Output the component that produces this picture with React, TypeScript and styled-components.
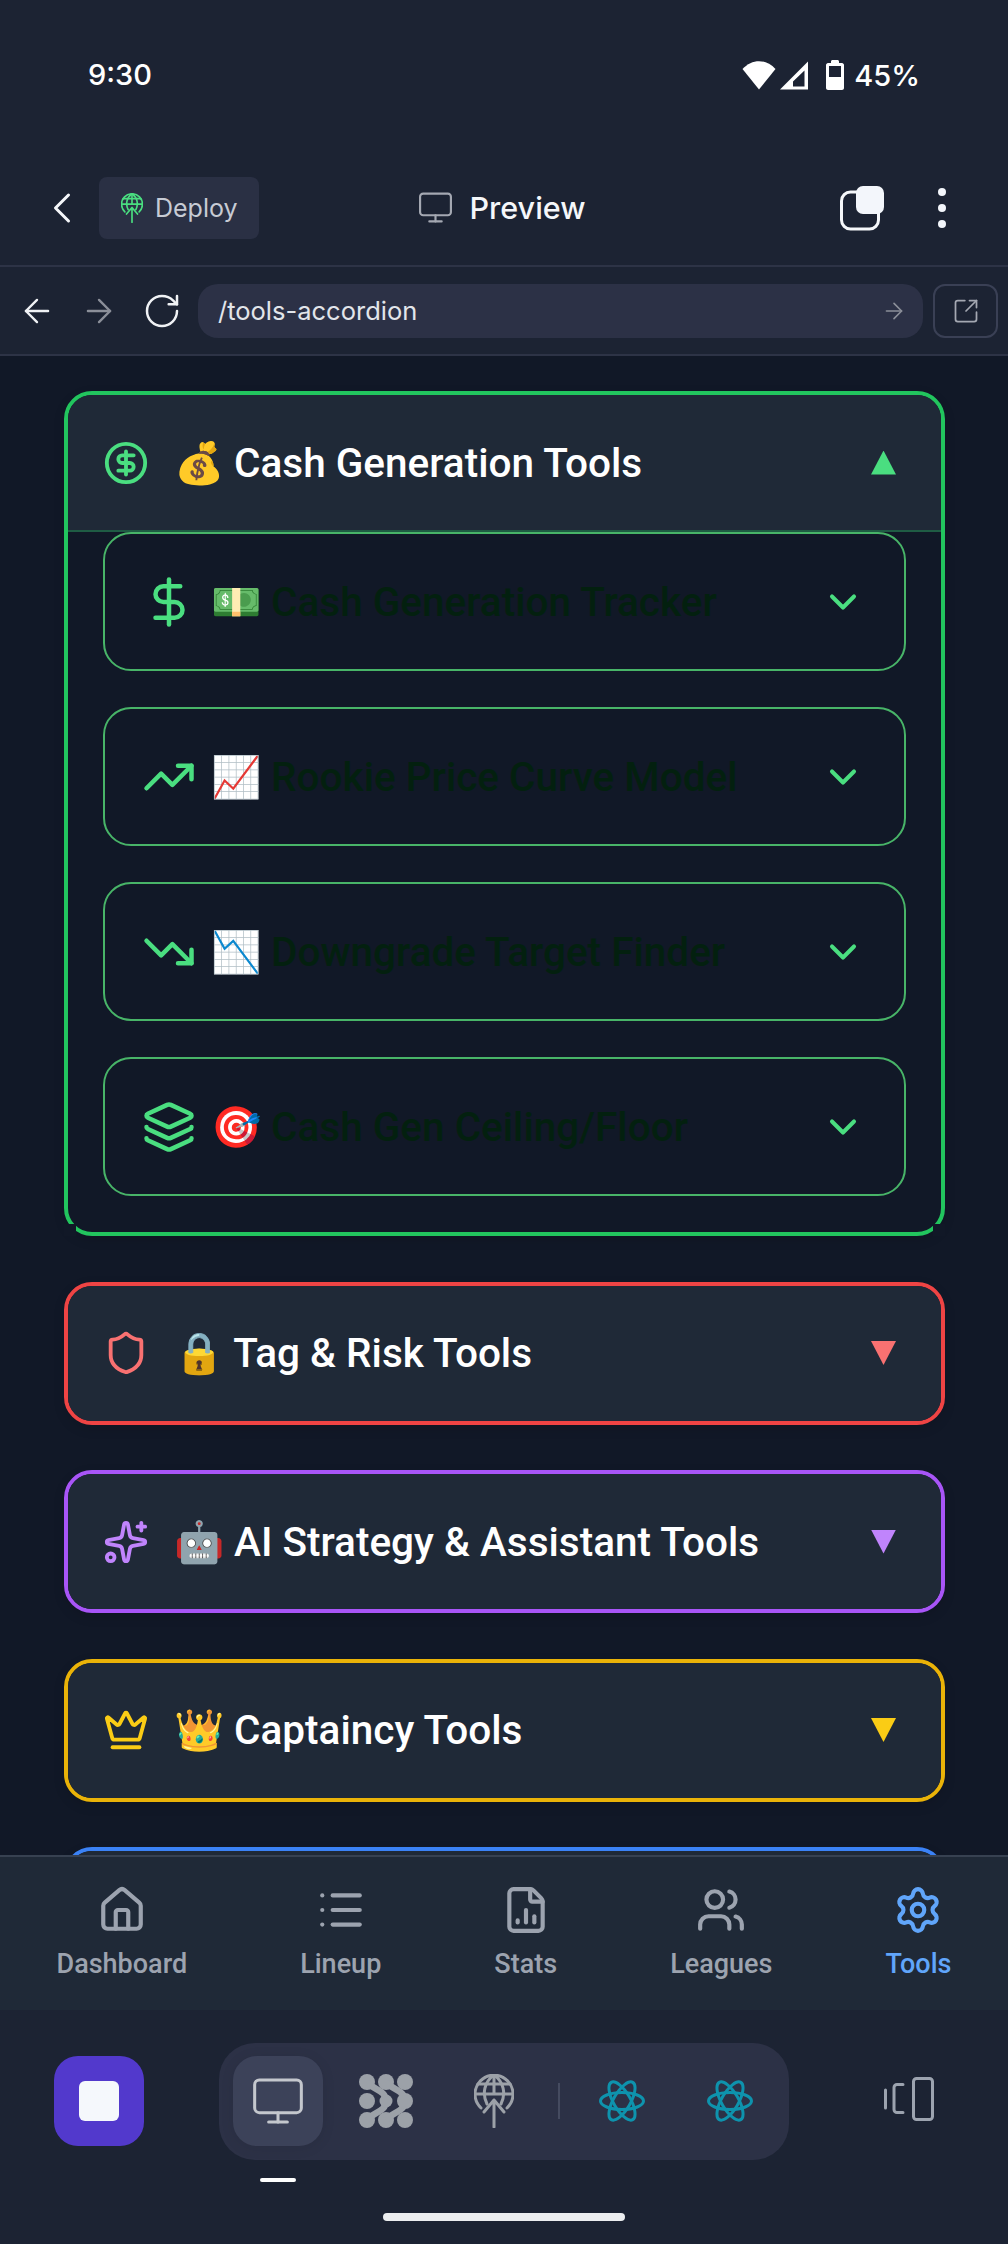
import React from "react";
import styled, { createGlobalStyle } from "styled-components";
import { ChevronLeft, Monitor, ArrowLeft, ArrowRight, RotateCw, SquareArrowOutUpRight, CircleDollarSign, DollarSign, TrendingUp, TrendingDown, Layers, Shield, Sparkles, Crown, ChevronDown, House, List, FileChartColumn, Users, Settings } from "lucide-react";

const Global = createGlobalStyle`
  html, body { margin: 0; padding: 0; background: #111827; }
  * { box-sizing: border-box; }
`;
const Screen = styled.div`
  width: 1008px; height: 2244px; display: flex; flex-direction: column; overflow: hidden;
  font-family: Roboto, "Noto Sans", sans-serif; color: #fff; background: #111827;
`;
const StatusBar = styled.div`
  height: 150px; flex: none; background: #1c2333; display: flex; justify-content: space-between; align-items: flex-start;
  padding: 58px 88px 0; font: 500 29px/34px Inter, sans-serif;
`;
const StatusRight = styled.div`display: flex; align-items: center; margin-top: 1px;`;
const StatusIcon = styled.svg<{ $mr: number }>`margin: -2px ${p => p.$mr}px 0 0; flex: none;`;
const Header = styled.div`
  height: 117px; flex: none; background: #1c2333; border-bottom: 2px solid #2d3346; display: grid; grid-template-columns: 1fr auto 1fr;
  align-items: center; padding: 0 62px 0 36px; font-family: Inter, sans-serif;
`;
const HeaderLeft = styled.div`display: flex; align-items: center; gap: 11px;`;
const HeaderRight = styled.div`display: flex; align-items: center; justify-content: flex-end; gap: 53px;`;
const DeployChip = styled.div`
  width: 160px; height: 62px; background: #2a3044; border-radius: 8px; display: flex; align-items: center; gap: 12px; padding-left: 22px;
  font-size: 25px; color: #c7cbd4;
`;
const PreviewTitle = styled.div`display: flex; align-items: center; gap: 15px; font-weight: 500; font-size: 30.5px; color: #f5f7fa; margin-left: 21px;`;
const UrlRow = styled.div`
  height: 89px; flex: none; background: #1c2333; border-bottom: 2px solid #2d3346; display: flex; align-items: center;
  padding: 0 10px 0 16px; font-family: Inter, sans-serif;
`;
const NavBtn = styled.div<{ $w: number }>`width: ${p => p.$w}px; display: flex; justify-content: center; flex: none;`;
const UrlPill = styled.div`
  flex: 1; height: 54px; margin: 0 10px 0 14px; background: #2c3146; border-radius: 20px; display: flex; align-items: center; justify-content: space-between;
  padding: 0 16px 0 20px; font-size: 25.5px; color: #e2e5ea;
`;
const ExtBtn = styled.div`
  width: 65px; height: 54px; border: 2px solid #3a4055; border-radius: 12px; display: flex; align-items: center; justify-content: center;
`;
const Content = styled.div`
  flex: 1 1 0; min-height: 0; overflow: hidden; padding: 35px 63px 0 64px; display: flex; flex-direction: column; gap: 45.5px;
`;
const Group = styled.div<{ $c: string; $cut?: boolean }>`
  flex: none; position: relative; border: 4px solid ${p => p.$c}; border-radius: 28px; box-shadow: 0 4px 12px rgba(0,0,0,.12);
  ${p => p.$cut && `
    &::before, &::after {
      content: ""; position: absolute; bottom: -4px; width: 12px; height: 12px; background: #111827;
    }
    &::before { left: -4px; }
    &::after { right: -4px; }
  `}
`;
const GroupHead = styled.div<{ $open?: boolean; $line?: string }>`
  height: ${p => (p.$open ? 137 : 135)}px; background: #1f2937; display: flex; align-items: center; padding: 0 45px 0 35px;
  font-size: 40.5px; font-weight: 500; gap: 25px; border-radius: ${p => (p.$open ? "24px 24px 0 0" : "24px")};
  ${p => p.$open && `border-bottom: 2px solid ${p.$line};`}
`;
const HeadTitle = styled.div`flex: 1; white-space: nowrap;`;
const Arrow = styled.span<{ $c: string; $up?: boolean }>`
  width: 25px; height: 24px; background: ${p => p.$c};
  clip-path: ${p => (p.$up ? "polygon(50% 0, 100% 100%, 0 100%)" : "polygon(0 0, 100% 0, 50% 100%)")};
`;
const GroupBody = styled.div`display: flex; flex-direction: column; gap: 36px; padding: 0 35px 36px;`;
const ToolRow = styled.div`
  height: 139px; border: 2px solid #48b468; border-radius: 28px; display: flex; align-items: center; padding: 0 39px 0 37px; gap: 15px;
  font-size: 40.5px; font-weight: 500; color: #03200f;
`;
const ToolTitle = styled.div`flex: 1; white-space: nowrap;`;
const ToolIcon = styled.span`width: 54px; height: 60px; display: flex; align-items: center; justify-content: center; flex: none;`;
const BottomNav = styled.div`
  height: 155px; flex: none; background: #1f2937; border-top: 2px solid #374151; display: flex; justify-content: space-around; align-items: flex-start; padding-top: 28px;
`;
const NavItem = styled.div<{ $active?: boolean }>`
  display: flex; flex-direction: column; align-items: center; gap: 11px; font-size: 27px; font-weight: 500; line-height: 36px;
  color: ${p => (p.$active ? "#60a5fa" : "#9ca3af")};
`;
const DevBar = styled.div`
  height: 234px; flex: none; background: #1c2333; position: relative; display: flex; align-items: flex-start; padding: 33px 74px 0 54px;
`;
const StopBtn = styled.div`
  width: 90px; height: 90px; margin-top: 13px; background: #5239cc; border-radius: 24px; display: flex; align-items: center; justify-content: center; flex: none;
`;
const StopSquare = styled.div`width: 40px; height: 40px; background: #f5f8fc; border-radius: 6px;`;
const Toolbar = styled.div`
  width: 570px; height: 117px; margin-left: 75px; background: #2c3146; border-radius: 36px; display: flex; align-items: center; padding: 0 0 1px 14px; flex: none;
`;
const ToolBtn = styled.div<{ $active?: boolean; $w: number }>`
  width: ${p => p.$w}px; height: 90px; border-radius: 24px; display: flex; align-items: center; justify-content: center; flex: none;
  ${p => p.$active && "background: #3c4259; box-shadow: 0 2px 14px rgba(0,0,0,.08);"}
`;
const Sep = styled.div`width: 2px; height: 36px; background: #454b60; margin: 0 8px 0 19px; flex: none;`;
const RightTool = styled.div`margin: 34px 0 0 auto; display: flex;`;
const ActiveMark = styled.div`position: absolute; left: 260px; top: 168px; width: 36px; height: 4px; background: #fff; border-radius: 2px;`;
const HomeBar = styled.div`position: absolute; left: 383px; top: 203px; width: 242px; height: 8px; background: #eceef0; border-radius: 4px;`;

const Wifi = () => (
  <StatusIcon $mr={4} width="34" height="30" viewBox="0 0 34 30"><path d="M.5 9C10-1.500 24-1.500 33.500 9L17 29.500Z" fill="#fff" /></StatusIcon>
);
const Signal = () => (
  <StatusIcon $mr={18} width="28" height="30" viewBox="0 0 28 30"><path d="M0 29.500 28 1.500V29.500Z M13 26.500H24.500V10.500L13 21.500Z" fill="#fff" fillRule="evenodd" /></StatusIcon>
);
const Battery = () => (
  <StatusIcon $mr={10} width="18" height="30" viewBox="0 0 18 30">
    <path d="M5 3V1.500C5 .7 5.700 0 6.500 0h5C12.300 0 13 .7 13 1.500V3h3c1 0 2 1 2 2v23c0 1-1 2-2 2H2c-1 0-2-1-2-2V5c0-1 1-2 2-2ZM3 6V17H15V6Z" fill="#fff" fillRule="evenodd" />
  </StatusIcon>
);
const Tabs = () => (
  <svg width="45" height="46" viewBox="0 0 45 46" fill="none">
    <rect x="1.500" y="7" width="37" height="37" rx="9" stroke="#f5f7fa" strokeWidth="3" />
    <rect x="16" y="1" width="28" height="28" rx="7" fill="#f3f6fb" />
  </svg>
);
const Dots = () => (
  <svg width="8" height="40" viewBox="0 0 8 40"><circle cx="4" cy="4" r="4" fill="#f3f6fb" /><circle cx="4" cy="20" r="4" fill="#f3f6fb" /><circle cx="4" cy="36" r="4" fill="#f3f6fb" /></svg>
);
const GlobeUp = ({ w, h, c }: { w: number; h: number; c: string }) => (
  <svg width={w} height={h} viewBox="0 0 40 54" fill="none" stroke={c} strokeWidth="3" strokeLinecap="round" strokeLinejoin="round">
    <path d="M7 34A19 19 0 1 1 33 34" />
    <path d="M13 30C8 20 10 8 20 1C30 8 32 20 27 30" />
    <path d="M20 1V20M1 20H39M4 10H36" />
    <path d="M20 53V26M10 38 20 26 30 38" />
  </svg>
);
const BlobLogo = () => (
  <svg width="54" height="54" viewBox="0 0 54 54" fill="#9ca1a8" stroke="none">
    {[[8, 8], [27, 8], [46, 8], [8, 27], [8, 46], [27, 46], [46, 46]].map(([x, y]) => <circle key={`${x}-${y}`} cx={x} cy={y} r="8" />)}
    <path d="M8 8C14 16 27 16 27 27S14 38 8 46" fill="none" stroke="#9ca1a8" strokeWidth="6.500" />
    <path d="M27 8C33 16 46 16 46 27S33 38 27 46" fill="none" stroke="#9ca1a8" strokeWidth="6.500" />
    <circle cx="46" cy="27" r="8" />
    <circle cx="27" cy="27" r="6.500" />
  </svg>
);
const ReactAtom = () => (
  <svg width="46" height="42" viewBox="0 0 46 42" fill="none" stroke="#0e93ad" strokeWidth="3">
    <ellipse cx="23" cy="21" rx="21.500" ry="8.500" />
    <ellipse cx="23" cy="21" rx="21.500" ry="8.500" transform="rotate(60 23 21)" />
    <ellipse cx="23" cy="21" rx="21.500" ry="8.500" transform="rotate(120 23 21)" />
  </svg>
);
const Rotate = () => (
  <svg width="50" height="44" viewBox="0 0 50 44" fill="none" stroke="#9ca3af" strokeWidth="3" strokeLinecap="round" strokeLinejoin="round">
    <rect x="29.500" y="1.500" width="19" height="41" rx="3" />
    <path d="M19 7.500H13a3 3 0 0 0-3 3v22a3 3 0 0 0 3 3h6" />
    <path d="M1.500 13V31" />
  </svg>
);

const GroupRow = ({ c, ac, icon, title }: { c: string; ac: string; icon: React.ReactNode; title: string }) => (
  <Group $c={c}>
    <GroupHead>
      {icon}
      <HeadTitle>{title}</HeadTitle>
      <Arrow $c={ac} />
    </GroupHead>
  </Group>
);

const tools = [
  { I: DollarSign, s: 60, t: "💵 Cash Generation Tracker" },
  { I: TrendingUp, s: 54, t: "📈 Rookie Price Curve Model" },
  { I: TrendingDown, s: 54, t: "📉 Downgrade Target Finder" },
  { I: Layers, s: 54, t: "🎯 Cash Gen Ceiling/Floor" },
];
const navs = [
  { I: House, t: "Dashboard" },
  { I: List, t: "Lineup" },
  { I: FileChartColumn, t: "Stats" },
  { I: Users, t: "Leagues" },
  { I: Settings, t: "Tools", a: true },
];

export default function App() {
  return (
    <>
      <Global />
      <Screen>
        <StatusBar>
          <span>9:30</span>
          <StatusRight><Wifi /><Signal /><Battery /><span>45%</span></StatusRight>
        </StatusBar>
        <Header>
          <HeaderLeft>
            <ChevronLeft size={52} color="#f5f7fa" strokeWidth={1.4} />
            <DeployChip><GlobeUp w={22} h={30} c="#4ade80" />Deploy</DeployChip>
          </HeaderLeft>
          <PreviewTitle><Monitor size={37} color="#a4a8b2" strokeWidth={1.4} />Preview</PreviewTitle>
          <HeaderRight><Tabs /><Dots /></HeaderRight>
        </Header>
        <UrlRow>
          <NavBtn $w={42}><ArrowLeft size={38} color="#f0f2f5" strokeWidth={1.5} /></NavBtn>
          <NavBtn $w={82}><ArrowRight size={38} color="#8b8f99" strokeWidth={1.5} /></NavBtn>
          <NavBtn $w={44}><RotateCw size={40} color="#f0f2f5" strokeWidth={1.5} /></NavBtn>
          <UrlPill>/tools-accordion<ArrowRight size={26} color="#8b8f99" strokeWidth={1.5} /></UrlPill>
          <ExtBtn><SquareArrowOutUpRight size={28} color="#a4a8b2" strokeWidth={1.5} /></ExtBtn>
        </UrlRow>
        <Content>
          <Group $c="#22c55e" $cut>
            <GroupHead $open $line="#1f5c44">
              <CircleDollarSign size={46} color="#4ade80" />
              <HeadTitle>💰 Cash Generation Tools</HeadTitle>
              <Arrow $c="#4ade80" $up />
            </GroupHead>
            <GroupBody>
              {tools.map(({ I, s, t }) => (
                <ToolRow key={t}>
                  <ToolIcon><I size={s} color="#4ade80" /></ToolIcon>
                  <ToolTitle>{t}</ToolTitle>
                  <ChevronDown size={44} color="#4ade80" strokeWidth={2.2} />
                </ToolRow>
              ))}
            </GroupBody>
          </Group>
          <GroupRow c="#ef4444" ac="#f87171" icon={<Shield size={46} color="#f87171" />} title="🔒 Tag & Risk Tools" />
          <GroupRow c="#a855f7" ac="#c084fc" icon={<Sparkles size={46} color="#c084fc" />} title="🤖 AI Strategy & Assistant Tools" />
          <GroupRow c="#eab308" ac="#facc15" icon={<Crown size={46} color="#facc15" />} title="👑 Captaincy Tools" />
          <Group $c="#3b82f6"><GroupHead /></Group>
        </Content>
        <BottomNav>
          {navs.map(({ I, t, a }) => (
            <NavItem key={t} $active={a}><I size={50} />{t}</NavItem>
          ))}
        </BottomNav>
        <DevBar>
          <StopBtn><StopSquare /></StopBtn>
          <Toolbar>
            <ToolBtn $active $w={90}><Monitor size={56} color="#c4c7cd" strokeWidth={1.3} /></ToolBtn>
            <ToolBtn $w={126}><BlobLogo /></ToolBtn>
            <ToolBtn $w={90}><GlobeUp w={40} h={54} c="#9ca1a8" /></ToolBtn>
            <Sep />
            <ToolBtn $w={108}><ReactAtom /></ToolBtn>
            <ToolBtn $w={108}><ReactAtom /></ToolBtn>
          </Toolbar>
          <RightTool><Rotate /></RightTool>
          <ActiveMark />
          <HomeBar />
        </DevBar>
      </Screen>
    </>
  );
}
